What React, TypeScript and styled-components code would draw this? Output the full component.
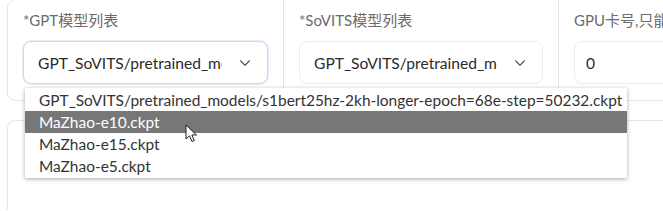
import React from 'react';
import styled, { createGlobalStyle } from 'styled-components';
import { ChevronDown } from 'lucide-react';

const GlobalStyle = createGlobalStyle`
  html, body {
    margin: 0;
    padding: 0;
    background: #ffffff;
    overflow: hidden;
  }
  body {
    font-family: Lato, "Noto Sans CJK SC", sans-serif;
  }
`;

const Page = styled.div`
  position: relative;
  width: 663px;
  height: 211px;
  padding: 0 0 0 7px;
  box-sizing: border-box;
  display: flex;
  flex-direction: column;
  gap: 19px;
  margin-top: -1px;
  overflow: hidden;
`;

const Form = styled.div`
  display: flex;
  width: 690px;
  height: 102px;
  flex: none;
  border: 1px solid #e6e6e6;
  border-radius: 8px;
  box-sizing: border-box;
`;

const Block = styled.div<{ $w?: number; $last?: boolean }>`
  width: ${p => (p.$w ? `${p.$w}px` : 'auto')};
  flex: ${p => (p.$w ? 'none' : '1')};
  border-right: ${p => (p.$last ? 'none' : '1px solid #e6e6e6')};
  padding: 10px 15px 0 15px;
  box-sizing: border-box;
  display: flex;
  flex-direction: column;
  gap: 11px;
`;

const Label = styled.div`
  font-size: 15px;
  color: #6b6b6b;
  line-height: 20px;
  white-space: nowrap;
`;

const Select = styled.div<{ $focus?: boolean; $pad?: number }>`
  height: 43px;
  border: 1px solid ${p => (p.$focus ? '#c5dcf5' : '#ececec')};
  box-shadow: ${p => (p.$focus ? '0 0 0 1px #e3effb' : 'none')};
  border-radius: 8px;
  display: flex;
  align-items: center;
  padding: 0 13px 0 ${p => p.$pad ?? 14}px;
  box-sizing: border-box;
  gap: 14px;
  background: #fff;
`;

const Value = styled.div`
  flex: 1;
  min-width: 0;
  font-size: 15.6px;
  color: #2b2b2b;
  white-space: nowrap;
  overflow: hidden;
`;

const Lower = styled.div`
  width: 690px;
  height: 120px;
  flex: none;
  border: 1px solid #e6e6e6;
  border-radius: 8px;
  box-sizing: border-box;
`;

const Menu = styled.ul`
  position: absolute;
  left: 25px;
  top: 89px;
  width: 602px;
  margin: 0;
  padding: 1px 0;
  list-style: none;
  background: #fff;
  box-shadow: 0 1px 4px rgba(0, 0, 0, 0.35);
  box-sizing: border-box;
`;

const Option = styled.li<{ $active?: boolean }>`
  height: 22px;
  line-height: 22px;
  padding-left: 14px;
  font-size: 15.45px;
  white-space: nowrap;
  color: ${p => (p.$active ? '#ffffff' : '#333333')};
  background: ${p => (p.$active ? '#777777' : 'transparent')};
`;

const Cursor = styled.svg`
  position: absolute;
  left: 185px;
  top: 125px;
`;

const options = [
  'GPT_SoVITS/pretrained_models/s1bert25hz-2kh-longer-epoch=68e-step=50232.ckpt',
  'MaZhao-e10.ckpt',
  'MaZhao-e15.ckpt',
  'MaZhao-e5.ckpt',
];

export default function App() {
  return (
    <>
      <GlobalStyle />
      <Page>
        <Form>
          <Block $w={276}>
            <Label>*GPT模型列表</Label>
            <Select $focus>
              <Value>GPT_SoVITS/pretrained_mo</Value>
              <ChevronDown size={18} strokeWidth={1.5} color="#555" />
            </Select>
          </Block>
          <Block $w={275}>
            <Label>*SoVITS模型列表</Label>
            <Select>
              <Value>GPT_SoVITS/pretrained_mo</Value>
              <ChevronDown size={18} strokeWidth={1.5} color="#555" />
            </Select>
          </Block>
          <Block $last>
            <Label>GPU卡号,只能</Label>
            <Select $pad={11}>
              <Value>0</Value>
            </Select>
          </Block>
        </Form>
        <Lower />
        <Menu>
          {options.map((o, i) => (
            <Option key={o} $active={i === 1}>{o}</Option>
          ))}
        </Menu>
        <Cursor width="13" height="19" viewBox="0 0 13 19">
          <path d="M1 1 L1 15 L4.5 11.8 L7 17.5 L9.3 16.5 L6.9 11 L11.5 11 Z" fill="#fff" stroke="#222" strokeWidth="1" strokeLinejoin="round" />
        </Cursor>
      </Page>
    </>
  );
}
